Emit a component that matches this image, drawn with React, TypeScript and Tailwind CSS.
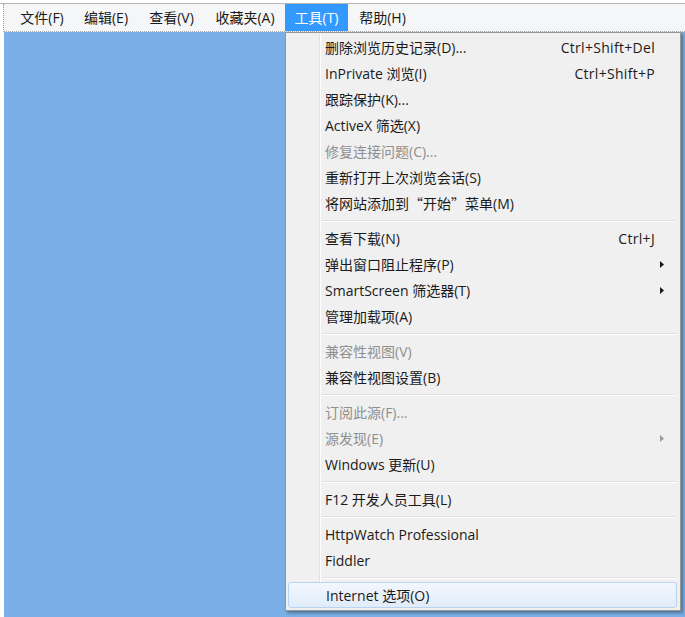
import React from 'react';

type Row =
  | { kind: 'sep' }
  | { kind: 'item'; label: React.ReactNode; shortcut?: string; arrow?: boolean; disabled?: boolean; active?: boolean };

const cjk = { fontFamily: '"Noto Sans CJK SC", sans-serif' };

const menuBar = [
  { label: '文件(F)', w: 'w-[64px]' },
  { label: '编辑(E)', w: 'w-[64px]' },
  { label: '查看(V)', w: 'w-[67px]' },
  { label: '收藏夹(A)', w: 'w-[80px]' },
  { label: '工具(T)', w: 'w-[63px]', open: true },
  { label: '帮助(H)', w: 'w-[69px]' },
];

const rows: Row[] = [
  { kind: 'item', label: '删除浏览历史记录(D)...', shortcut: 'Ctrl+Shift+Del' },
  { kind: 'item', label: 'InPrivate 浏览(I)', shortcut: 'Ctrl+Shift+P' },
  { kind: 'item', label: '跟踪保护(K)...' },
  { kind: 'item', label: 'ActiveX 筛选(X)' },
  { kind: 'item', label: '修复连接问题(C)...', disabled: true },
  { kind: 'item', label: '重新打开上次浏览会话(S)' },
  {
    kind: 'item',
    label: (
      <>
        将网站添加到<span style={cjk}>“</span>开始<span style={cjk}>”</span>菜单(M)
      </>
    ),
  },
  { kind: 'sep' },
  { kind: 'item', label: '查看下载(N)', shortcut: 'Ctrl+J' },
  { kind: 'item', label: '弹出窗口阻止程序(P)', arrow: true },
  { kind: 'item', label: 'SmartScreen 筛选器(T)', arrow: true },
  { kind: 'item', label: '管理加载项(A)' },
  { kind: 'sep' },
  { kind: 'item', label: '兼容性视图(V)', disabled: true },
  { kind: 'item', label: '兼容性视图设置(B)' },
  { kind: 'sep' },
  { kind: 'item', label: '订阅此源(F)...', disabled: true },
  { kind: 'item', label: '源发现(E)', arrow: true, disabled: true },
  { kind: 'item', label: 'Windows 更新(U)' },
  { kind: 'sep' },
  { kind: 'item', label: 'F12 开发人员工具(L)' },
  { kind: 'sep' },
  { kind: 'item', label: 'HttpWatch Professional' },
  { kind: 'item', label: 'Fiddler' },
  { kind: 'sep' },
  { kind: 'item', label: 'Internet 选项(O)', active: true },
];

const Arrow = ({ disabled }: { disabled?: boolean }) => (
  <svg width="4" height="7" viewBox="0 0 4 7" className="ml-[5px]">
    <polygon points="0,0 4,3.5 0,7" fill={disabled ? '#9a9a9a' : '#1a1a1a'} />
  </svg>
);

const App: React.FC = () => {
  return (
    <div
      className="relative w-[685px] h-[617px] overflow-hidden bg-white flex flex-col"
      style={{ fontFamily: '"Open Sans", "Noto Sans CJK SC", sans-serif' }}
    >
      <div className="h-[4px] bg-white border-b border-[#b5b5b5]" />
      <div className="flex h-[28px] ml-[3px] border-l border-dotted border-[#9a9a9a] bg-[#f5f6f7] border-b border-b-[#a9a9a9] pl-[6px]">
        {menuBar.map((m) => (
          <div
            key={m.label}
            className={`${m.w} flex items-center justify-center text-[14px] leading-none ${
              m.open ? 'bg-[#3399ff] text-white' : 'text-[#1a1a1a]'
            }`}
          >
            {m.label}
          </div>
        ))}
      </div>
      <div className="flex-1 ml-[4px] bg-[#7aafe7]" />

      {/* 工具 dropdown */}
      <div className="absolute left-[285px] top-[32px] w-[396px] border border-[#979797] bg-[#f0f0f0] pt-[1px] pb-[2px] pl-[2px] pr-[2px] shadow-[2px_2px_3px_rgba(0,0,0,0.35)]">
        {rows.map((r, i) => {
          if (r.kind === 'sep') {
            return (
              <div key={i} className="flex h-[9px]">
                <div className="w-[32px] shrink-0 border-r border-[#e2e3e3]" />
                <div className="flex-1 border-l border-white flex items-center pl-[1px] pr-[2px]">
                  <div className="w-full h-[2px] border-t border-[#e0e0e0] border-b border-b-white" />
                </div>
              </div>
            );
          }
          if (r.active) {
            return (
              <div
                key={i}
                className="flex h-[26px] mr-[1px] items-center rounded-[3px] border border-[#b8d3f1] bg-gradient-to-b from-[#f2f7fd] to-[#e1ecf9]"
              >
                <div className="w-[32px] shrink-0" />
                <span className="pl-[5px] text-[14px] text-[#1a1a1a]">{r.label}</span>
              </div>
            );
          }
          const color = r.disabled ? 'text-[#8f8f8f]' : 'text-[#1a1a1a]';
          return (
            <div key={i} className="flex h-[26px]">
              <div className="w-[32px] shrink-0 border-r border-[#e2e3e3]" />
              <div className={`flex-1 flex items-center border-l border-white pl-[4px] text-[14px] ${color}`}>
                <span className="flex-1 whitespace-nowrap">{r.label}</span>
                {r.shortcut && <span className="whitespace-nowrap tracking-[0.3px]">{r.shortcut}</span>}
                <div className="w-[23px] flex items-center">{r.arrow && <Arrow disabled={r.disabled} />}</div>
              </div>
            </div>
          );
        })}
      </div>
    </div>
  );
};

export default App;
